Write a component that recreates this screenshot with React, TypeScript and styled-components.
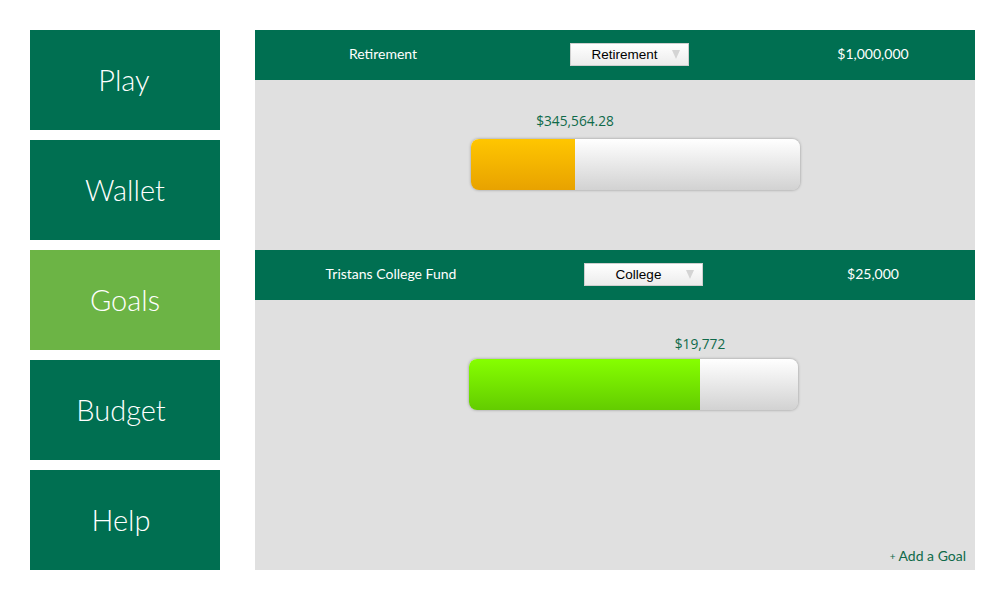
import React from "react";
import styled, { createGlobalStyle } from "styled-components";

const GlobalStyle = createGlobalStyle`
  html, body { margin: 0; padding: 0; background: #ffffff; }
  body { font-family: Lato, "Open Sans", sans-serif; }
`;

const Page = styled.div`
  display: flex;
  gap: 35px;
  padding: 30px;
  width: 1000px;
  height: 600px;
  box-sizing: border-box;
`;

const Sidebar = styled.nav`
  display: flex;
  flex-direction: column;
  gap: 10px;
  width: 190px;
  flex-shrink: 0;
`;

const NavButton = styled.div<{ $active?: boolean; $shift?: number }>`
  height: 100px;
  background: ${(p) => (p.$active ? "#6cb445" : "#006f51")};
  color: #ffffff;
  display: flex;
  align-items: center;
  justify-content: center;
  font-family: Lato, sans-serif;
  font-weight: 300;
  font-size: 29px;
  padding-right: ${(p) => p.$shift ?? 0}px;
  padding-bottom: 2px;
  box-sizing: border-box;
`;

const Panel = styled.main`
  width: 720px;
  height: 540px;
  flex-shrink: 0;
  background: #e0e0e0;
  display: flex;
  flex-direction: column;
  position: relative;
`;

const GoalHeader = styled.div<{ $first: number; $selPad: number }>`
  height: 50px;
  padding-bottom: 4px;
  box-sizing: border-box;
  background: #006f51;
  display: grid;
  grid-template-columns: ${(p) => p.$first}px 1fr 204px;
  align-items: center;
  color: #ffffff;
  font-family: Lato, sans-serif;
  font-size: 14px;
  & > :nth-child(2) { padding-left: ${(p) => p.$selPad}px; }
`;

const HeaderCell = styled.div`
  text-align: center;
`;

const SelectCell = styled.div`
  display: flex;
  padding-top: 2px;
`;

const SelectBox = styled.div`
  width: 119px;
  height: 23px;
  box-sizing: border-box;
  border: 1px solid #cfcfcf;
  background: linear-gradient(#ffffff, #ececec);
  color: #000;
  font-family: "Liberation Sans", Arial, sans-serif;
  font-size: 13.5px;
  display: flex;
  align-items: center;
  padding-left: 12px;
  padding-right: 8px;
`;

const SelectText = styled.span`
  flex: 1;
  text-align: center;
`;

const Arrow = styled.span`
  width: 0;
  height: 0;
  border-left: 4.5px solid transparent;
  border-right: 4.5px solid transparent;
  border-top: 9px solid #d4d4d4;
  margin-left: 6px;
`;

const GoalBody = styled.div<{ $height: number; $top: number; $left: number; $gap: number }>`
  height: ${(p) => p.$height}px;
  padding-top: ${(p) => p.$top}px;
  padding-left: ${(p) => p.$left}px;
  box-sizing: border-box;
  display: flex;
  flex-direction: column;
  gap: ${(p) => p.$gap}px;
`;

const AmountRow = styled.div`
  position: relative;
  height: 20px;
  width: 329px;
`;

const AmountLabel = styled.span`
  position: absolute;
  top: 0;
  transform: translateX(-50%);
  font-family: "Open Sans", sans-serif;
  font-size: 13.7px;
  color: #0f6a4a;
  white-space: nowrap;
`;

const Bar = styled.div`
  width: 329px;
  height: 51px;
  border-radius: 8px;
  overflow: hidden;
  background: linear-gradient(#ffffff, #d2d2d2);
  box-shadow: 0 0 3px rgba(0, 0, 0, 0.35);
  display: flex;
`;

const Fill = styled.div<{ $kind: "gold" | "green" }>`
  height: 100%;
  background: ${(p) =>
    p.$kind === "gold"
      ? "linear-gradient(#ffc600, #e8a200)"
      : "linear-gradient(#86ff00, #63cc00)"};
`;

const AddGoal = styled.div`
  position: absolute;
  right: 9px;
  bottom: 6px;
  font-family: Lato, sans-serif;
  font-size: 14px;
  color: #0f6a4a;
`;

const Plus = styled.span`
  font-size: 10px;
  margin-right: 3px;
  vertical-align: 1px;
`;

type Goal = {
  name: string;
  category: string;
  target: string;
  saved: string;
  fill: number;
  kind: "gold" | "green";
  first: number;
  selPad: number;
  bodyH: number;
  top: number;
  left: number;
  gap: number;
};

const goals: Goal[] = [
  { name: "Retirement", category: "Retirement", target: "$1,000,000", saved: "$345,564.28", fill: 104, kind: "gold", first: 256, selPad: 59, bodyH: 170, top: 31, left: 216, gap: 8 },
  { name: "Tristans College Fund", category: "College", target: "$25,000", saved: "$19,772", fill: 231, kind: "green", first: 272, selPad: 57, bodyH: 270, top: 34, left: 214, gap: 5 },
];

export default function App() {
  return (
    <>
      <GlobalStyle />
      <Page>
        <Sidebar>
          <NavButton $shift={2}>Play</NavButton>
          <NavButton>Wallet</NavButton>
          <NavButton $active>Goals</NavButton>
          <NavButton $shift={8}>Budget</NavButton>
          <NavButton $shift={8}>Help</NavButton>
        </Sidebar>
        <Panel>
          {goals.map((g) => (
            <React.Fragment key={g.name}>
              <GoalHeader $first={g.first} $selPad={g.selPad}>
                <HeaderCell>{g.name}</HeaderCell>
                <SelectCell>
                  <SelectBox>
                    <SelectText>{g.category}</SelectText>
                    <Arrow />
                  </SelectBox>
                </SelectCell>
                <HeaderCell>{g.target}</HeaderCell>
              </GoalHeader>
              <GoalBody $height={g.bodyH} $top={g.top} $left={g.left} $gap={g.gap}>
                <AmountRow>
                  <AmountLabel style={{ left: g.fill }}>{g.saved}</AmountLabel>
                </AmountRow>
                <Bar>
                  <Fill $kind={g.kind} style={{ width: g.fill }} />
                </Bar>
              </GoalBody>
            </React.Fragment>
          ))}
          <AddGoal>
            <Plus>+</Plus>Add a Goal
          </AddGoal>
        </Panel>
      </Page>
    </>
  );
}
